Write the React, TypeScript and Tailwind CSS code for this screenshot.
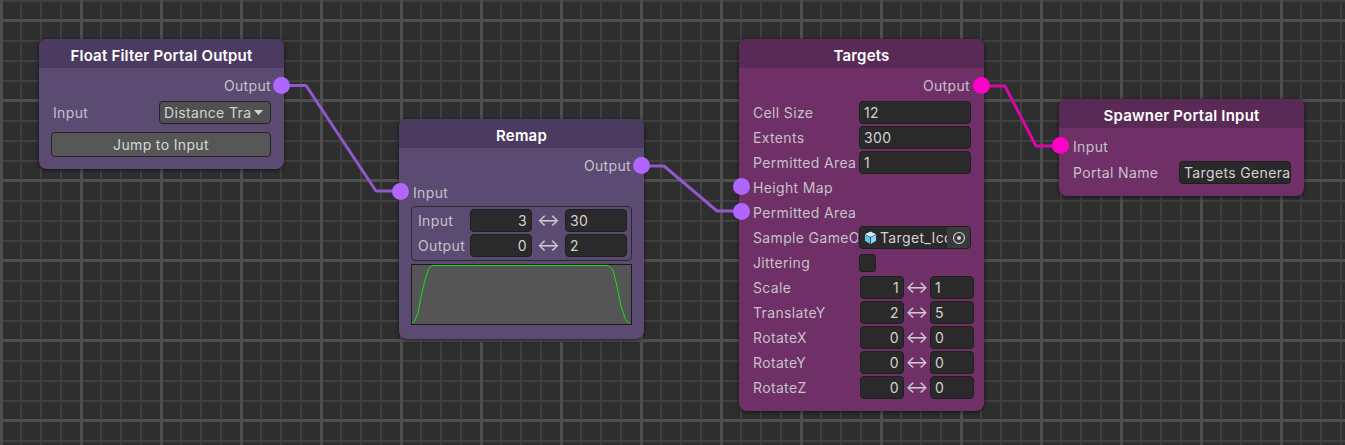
import React from "react";

const label = "text-[14px] tracking-[0.35px] leading-[25px] text-[#c6c1cb] whitespace-nowrap overflow-hidden";
const field = "h-[23px] rounded-[4px] border border-[#1f1f1f] bg-[#2a2a2a] text-[14px] tracking-[0.35px] leading-[21px] text-[#d2d2d2] whitespace-nowrap overflow-hidden";

function Node({ pos, title, pink, children }: { pos: string; title: string; pink?: boolean; children: React.ReactNode }) {
  return (
    <div className={`absolute ${pos} w-[245px] rounded-[8px] shadow-[0_1px_4px_rgba(0,0,0,0.6)] ${pink ? "bg-[#6e3066]" : "bg-[#5b4a72]"}`}>
      <div className={`h-[29px] rounded-t-[8px] text-center text-[15px] tracking-[0.2px] leading-[33px] font-semibold text-white ${pink ? "bg-[#592a56]" : "bg-[#4c3b60]"}`}>
        {title}
      </div>
      {children}
    </div>
  );
}

function Port({ pos, pink }: { pos: string; pink?: boolean }) {
  return <div className={`absolute ${pos} h-[17px] w-[17px] rounded-full ${pink ? "bg-[#ff00c8]" : "bg-[#b066ff]"}`} />;
}

function Row({ name, children, cut }: { name: string; children?: React.ReactNode; cut?: boolean }) {
  return (
    <div className="flex h-[25px] items-center">
      <div className={`${label} ${cut ? "w-[105px] shrink-0" : ""}`}>{name}</div>
      {children}
    </div>
  );
}

function Range({ name, a, b }: { name: string; a: string; b: string }) {
  return (
    <div className="flex h-[25px] items-center">
      <div className={`${label} w-[107px] shrink-0`}>{name}</div>
      <div className={`${field} w-[44px] px-[4px] text-right`}>{a}</div>
      <div className="w-[26px] text-center text-[17px] leading-[21px] text-[#cfcad3]">↔</div>
      <div className={`${field} w-[44px] px-[4px]`}>{b}</div>
    </div>
  );
}

export default function App() {
  return (
    <div className="relative h-[445px] w-[1345px] overflow-hidden bg-[#2e2e2e] font-['Inter','Noto_Sans',sans-serif] [background-image:linear-gradient(to_right,#4e4e4e_3px,transparent_3px),linear-gradient(to_bottom,#4e4e4e_3px,transparent_3px),linear-gradient(to_right,#3f3f3f_2px,transparent_2px),linear-gradient(to_bottom,#3f3f3f_2px,transparent_2px)] [background-size:80px_80px,80px_80px,20px_20px,20px_20px] [background-position:0px_0px,0px_19px,0px_0px,0px_20px]">
      <svg className="absolute inset-0" width="1345" height="445" fill="none" strokeWidth="3" strokeLinejoin="round">
        <polyline points="281,85.5 306,85.5 376,191 401,191" stroke="#9257cc" />
        <polyline points="641,166 664,166 717,211 741,211" stroke="#9257cc" />
        <polyline points="981,86 1005,86 1036,146 1061,146" stroke="#d808a8" />
      </svg>

      <Node pos="left-[39px] top-[39px]" title="Float Filter Portal Output">
        <div className="pb-[12px] pl-[14px] pr-[13px] pt-[5px]">
          <div className="text-right"><div className={label}>Output</div></div>
          <div className="mt-[1px] flex h-[27px] items-center justify-between">
            <div className={label}>Input</div>
            <div className="flex h-[23px] w-[112px] items-center justify-between rounded-[4px] border border-[#232323] bg-[#505050] pl-[4px] pr-[7px] text-[14px] tracking-[0.35px] text-[#d2d2d2]">
              <span className="w-[87px] overflow-hidden whitespace-nowrap">Distance Transform</span>
              <svg width="9" height="5" viewBox="0 0 9 5"><polygon points="0,0 9,0 4.5,5" fill="#d2d2d2" /></svg>
            </div>
          </div>
          <div className="-ml-[2px] mt-[6px] h-[25px] rounded-[4px] border border-[#232323] bg-[#565656] text-center text-[14px] tracking-[0.35px] leading-[23px] text-[#d6d6d6]">Jump to Input</div>
        </div>
      </Node>

      <Node pos="left-[399px] top-[119px]" title="Remap">
        <div className="px-[12px] pb-[14px] pt-[5px]">
          <div className="pr-[1px] text-right"><div className={label}>Output</div></div>
          <div className="mt-[2px] pl-[2px]"><div className={label}>Input</div></div>
          <div className="mt-[1px] flex flex-col gap-[2px] rounded-[4px] border border-[#2a2a2a] pb-[3px] pl-[6px] pr-[3px] pt-[2px]">
            {[["Input", "3", "30"], ["Output", "0", "2"]].map(([n, a, b]) => (
              <div key={n} className="flex h-[23px] items-center">
                <div className="w-[52px] shrink-0 text-[14px] tracking-[0.35px] text-[#c6c1cb]">{n}</div>
                <div className={`${field} w-[62px] px-[4px] text-right`}>{a}</div>
                <div className="w-[33px] text-center text-[17px] leading-[21px] text-[#cfcad3]">↔</div>
                <div className={`${field} w-[62px] px-[4px]`}>{b}</div>
              </div>
            ))}
          </div>
          <div className="mt-[3px] h-[61px] border border-[#1c1c1c] bg-[#555555]">
            <svg width="218" height="59" viewBox="0 0 218 59" fill="none">
              <polyline points="0,58 2.5,56.3 6,48 9,31.3 14,11.3 17,3 20,0.5 196,0.5 201,5 205,21.3 209,41.3 213.5,54.7 217,58" stroke="#14e014" strokeWidth="1" />
            </svg>
          </div>
        </div>
      </Node>

      <Node pos="left-[739px] top-[39px]" title="Targets" pink>
        <div className="pb-[11px] pl-[14px] pr-[10px] pt-[5px]">
          <div className="pr-[4px] text-right"><div className={label}>Output</div></div>
          <div className="mt-[2px]">
            <Row name="Cell Size" cut><div className={`${field} ml-[1px] w-[112px] px-[4px]`}>12</div></Row>
            <Row name="Extents" cut><div className={`${field} ml-[1px] w-[112px] px-[4px]`}>300</div></Row>
            <Row name="Permitted Area" cut><div className={`${field} ml-[1px] w-[112px] px-[4px]`}>1</div></Row>
            <Row name="Height Map" />
            <Row name="Permitted Area" />
            <Row name="Sample GameObject" cut>
              <div className={`${field} ml-[1px] flex w-[112px] items-center pl-[4px]`}>
                <svg className="shrink-0" width="13" height="13" viewBox="0 0 14 14">
                  <polygon points="7,0.5 13,3.5 7,6.5 1,3.5" fill="#cbeeff" />
                  <polygon points="1,4 6.6,7 6.6,14 1,10.5" fill="#63c2ee" />
                  <polygon points="13,4 7.4,7 7.4,14 13,10.5" fill="#8ed6f7" />
                </svg>
                <span className="ml-[3px] w-[67px] overflow-hidden">Target_Icon</span>
                <span className="flex h-full flex-1 items-center justify-center bg-[#3a3a3a]">
                  <svg width="14" height="14" viewBox="0 0 14 14" fill="none">
                    <circle cx="7" cy="7" r="5.5" stroke="#d2d2d2" strokeWidth="1.2" />
                    <circle cx="7" cy="7" r="2" fill="#d2d2d2" />
                  </svg>
                </span>
              </div>
            </Row>
            <Row name="Jittering" cut><div className="ml-[1px] h-[18px] w-[17px] rounded-[3px] border border-[#1f1f1f] bg-[#2a2a2a]" /></Row>
            <Range name="Scale" a="1" b="1" />
            <Range name="TranslateY" a="2" b="5" />
            <Range name="RotateX" a="0" b="0" />
            <Range name="RotateY" a="0" b="0" />
            <Range name="RotateZ" a="0" b="0" />
          </div>
        </div>
      </Node>

      <Node pos="left-[1059px] top-[99px]" title="Spawner Portal Input" pink>
        <div className="pb-[11px] pl-[14px] pr-[13px] pt-[6px]">
          <Row name="Input" />
          <div className="mt-[1px]">
            <Row name="Portal Name">
              <div className={`${field} ml-auto w-[112px] px-[4px]`}>Targets Generator</div>
            </Row>
          </div>
        </div>
      </Node>

      <Port pos="left-[273px] top-[77px]" />
      <Port pos="left-[392px] top-[183px]" />
      <Port pos="left-[633px] top-[157px]" />
      <Port pos="left-[733px] top-[178px]" />
      <Port pos="left-[733px] top-[203px]" />
      <Port pos="left-[973px] top-[77px]" pink />
      <Port pos="left-[1052px] top-[137px]" pink />
    </div>
  );
}
